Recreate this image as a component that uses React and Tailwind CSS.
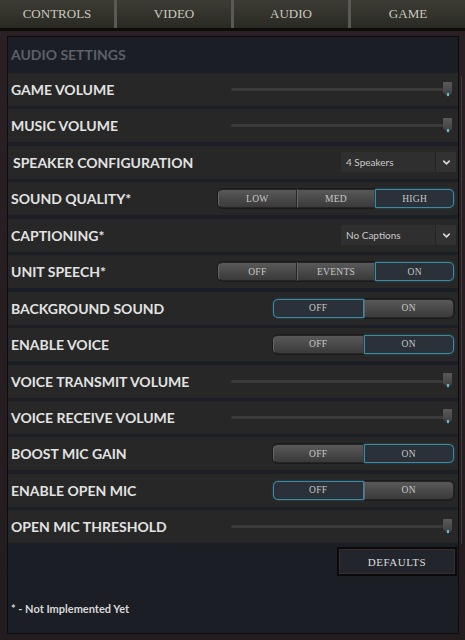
import React from "react";
import { ChevronDown } from "lucide-react";

const serif = { fontFamily: '"Liberation Serif", "DejaVu Serif", serif' };
const sans = { fontFamily: 'Lato, "Open Sans", "Liberation Sans", sans-serif' };

const tabs = ["CONTROLS", "VIDEO", "AUDIO", "GAME"];

const rows = [
  { label: "GAME VOLUME", type: "slider" },
  { label: "MUSIC VOLUME", type: "slider" },
  { label: "SPEAKER CONFIGURATION", type: "select", value: "4 Speakers", indent: true },
  { label: "SOUND QUALITY*", type: "seg3", options: ["LOW", "MED", "HIGH"], active: 2 },
  { label: "CAPTIONING*", type: "select", value: "No Captions" },
  { label: "UNIT SPEECH*", type: "seg3", options: ["OFF", "EVENTS", "ON"], active: 2 },
  { label: "BACKGROUND SOUND", type: "seg2", options: ["OFF", "ON"], active: 0 },
  { label: "ENABLE VOICE", type: "seg2", options: ["OFF", "ON"], active: 1 },
  { label: "VOICE TRANSMIT VOLUME", type: "slider" },
  { label: "VOICE RECEIVE VOLUME", type: "slider" },
  { label: "BOOST MIC GAIN", type: "seg2", options: ["OFF", "ON"], active: 1 },
  { label: "ENABLE OPEN MIC", type: "seg2", options: ["OFF", "ON"], active: 0 },
  { label: "OPEN MIC THRESHOLD", type: "slider" },
];

const Slider = () => (
  <div className="relative w-[222px] h-[20px] mr-[5px] flex items-center">
    <div className="h-[3px] w-[213px] bg-[#3a3a3a] rounded-full" />
    <div className="absolute right-[1px] top-[2px] flex flex-col items-center">
      <div className="w-[9px] h-[11px] bg-gradient-to-b from-[#5a5a5a] to-[#444] rounded-[1px]" />
      <div className="w-0 h-0 border-l-[4px] border-r-[4px] border-t-[4px] border-l-transparent border-r-transparent border-t-[#444]" />
      <div className="absolute bottom-[1px] w-[2px] h-[3px] bg-[#5fb8d6]" />
    </div>
  </div>
);

const Select = ({ value }) => (
  <div className="flex h-[20px] w-[115px] mr-[2px] bg-[#2f2f2f]" style={sans}>
    <div className="flex-1 flex items-center pl-[5px] text-[10px] text-[#c9c9c9]">{value}</div>
    <div className="w-[21px] border-l border-[#252525] flex items-center justify-center bg-[#323232]">
      <ChevronDown size={11} strokeWidth={3.5} color="#d8d8d8" />
    </div>
  </div>
);

const Seg = ({ options, active, width }) => (
  <div
    className={`flex h-[21px] rounded-[6px] bg-[#1b1b1b] p-[1px] mr-[3px] ${width}`}
    style={serif}
  >
    {options.map((o, i) => {
      const on = i === active;
      const first = i === 0;
      const last = i === options.length - 1;
      return (
        <div
          key={o}
          className={`flex-1 flex items-center justify-center text-[9.5px] tracking-[0.3px] text-[#c8c8c8] ${
            first ? "rounded-l-[5px]" : ""
          } ${last ? "rounded-r-[5px]" : ""} ${
            on
              ? "bg-[#2b3139] border border-[#3f8aa2] shadow-[0_0_2px_#3f8aa2]"
              : "bg-gradient-to-b from-[#595959] to-[#3a3a3a] border border-[#252525] border-l-[#666]"
          }`}
        >
          {o}
        </div>
      );
    })}
  </div>
);

const Row = ({ row }) => (
  <div className="h-[33px] bg-[#272727] flex items-center justify-between">
    <span
      className={`${row.indent ? "pl-[5px]" : "pl-[3px]"} text-[14px] font-bold text-[#e2e2e2]`}
      style={sans}
    >
      {row.label}
    </span>
    {row.type === "slider" && <Slider />}
    {row.type === "select" && <Select value={row.value} />}
    {row.type === "seg3" && <Seg options={row.options} active={row.active} width="w-[238px]" />}
    {row.type === "seg2" && <Seg options={row.options} active={row.active} width="w-[183px]" />}
  </div>
);

export default function App() {
  return (
    <div className="w-[465px] h-[640px] flex flex-col bg-[#141414] overflow-hidden">
      <div className="h-[28px] flex bg-[#1e1e1a]">
        {tabs.map((t, i) => (
          <div
            key={t}
            className={`flex-1 flex items-center justify-center bg-gradient-to-b from-[#3d3c34] to-[#2a2a24] text-[13px] text-[#c9c9bf] ${
              i > 0 ? "border-l-[3px] border-[#5a5a55]" : ""
            }`}
            style={serif}
          >
            {t}
          </div>
        ))}
      </div>
      <div className="h-[3px] bg-[#0e0d0c]" />
      <div className="flex-1 flex bg-gradient-to-b from-[#2a2024] to-[#231c1f] pl-[7px] pt-[5px] pb-[6px]">
        <div className="flex-1 flex flex-col border border-[#0b0c0f] bg-[#1b1e25]">
          <div className="h-[36px] flex items-center pl-[3px] pb-[2px]">
            <span className="text-[14px] font-bold text-[#5c6068]" style={sans}>
              AUDIO SETTINGS
            </span>
          </div>
          <div className="flex flex-col gap-[3.45px]">
            {rows.map((r) => (
              <Row key={r.label} row={r} />
            ))}
          </div>
          <div className="flex justify-end mt-[4px] pr-[1px]">
            <div className="w-[120px] h-[29px] bg-[#0a0a0a] p-[2px]">
              <div
                className="w-full h-full border border-[#3d2b2c] bg-[#22252b] flex items-center justify-center text-[11px] text-[#dcdcdc] tracking-[0.5px]"
                style={serif}
              >
                DEFAULTS
              </div>
            </div>
          </div>
          <div className="mt-[25px] pl-[3px] text-[11px] font-bold text-[#d8d8d8]" style={sans}>
            * - Not Implemented Yet
          </div>
        </div>
        <div className="w-[6px] flex pt-[40px] pb-[90px] pl-[2px]">
          <div className="w-[1px] bg-[#3c3c3c]" />
        </div>
      </div>
    </div>
  );
}
